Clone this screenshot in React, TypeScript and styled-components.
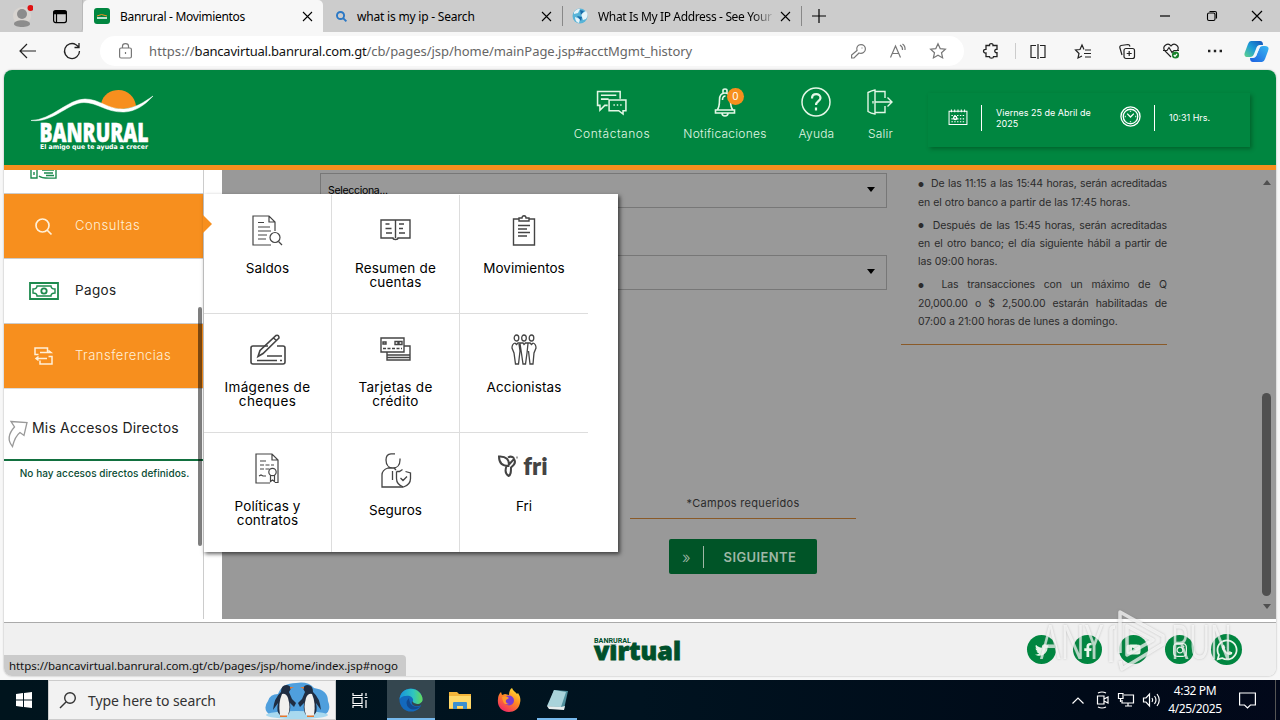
import React from 'react';
import styled, { createGlobalStyle, css } from 'styled-components';
import {
  FaTwitter,
  FaFacebookF,
  FaYoutube,
  FaInstagram,
  FaWhatsapp,
} from 'react-icons/fa';

const GREEN = '#008640';
const ORANGE = '#f78f1e';

const GlobalStyle = createGlobalStyle`
  * {
    box-sizing: border-box;
  }
  body {
    margin: 0;
    overflow: hidden;
    font-family: 'Noto Sans', 'Open Sans', sans-serif;
  }
`;

const Screen = styled.div`
  width: 1280px;
  height: 720px;
  display: flex;
  flex-direction: column;
  background: #f7f7f7;
  overflow: hidden;
`;

const Text = styled.span<{
  $size: number;
  $ls?: number;
  $color?: string;
  $weight?: number;
}>`
  font-size: ${(p) => p.$size}px;
  letter-spacing: ${(p) => p.$ls ?? 0}px;
  color: ${(p) => p.$color ?? 'inherit'};
  font-weight: ${(p) => p.$weight ?? 400};
  white-space: nowrap;
`;

const Svg = styled.svg<{ $sw?: number }>`
  display: block;
  flex: none;
  fill: none;
  stroke: currentColor;
  stroke-width: ${(p) => p.$sw ?? 1.2};
  overflow: visible;
`;

/* ---------- browser ---------- */

const TabStrip = styled.div`
  display: flex;
  height: 32px;
  flex: none;
  background: #cccccc;
`;

const Profile = styled.div`
  width: 83px;
  display: flex;
  align-items: center;
  padding-left: 13px;
  gap: 22px;
  border-bottom-right-radius: 4px;
  border-right: 1px solid #b9b9b9;
`;

const Tab = styled.div<{ $active?: boolean; $width: number; $pad?: number }>`
  width: ${(p) => p.$width}px;
  display: flex;
  align-items: center;
  padding: 0 11px 0 ${(p) => p.$pad ?? 12}px;
  ${(p) =>
    p.$active &&
    css`
      background: #f7f7f7;
      border-radius: 5px 5px 0 0;
    `}
`;

const TabTitle = styled.div<{ $fade?: boolean }>`
  flex: 1;
  min-width: 0;
  margin-left: 10px;
  white-space: nowrap;
  line-height: 20px;
  ${(p) =>
    p.$fade &&
    css`
      mask-image: linear-gradient(90deg, #000 84%, transparent 97%);
    `}
`;

const Divider = styled.div<{ $h: number; $color: string }>`
  width: 1px;
  height: ${(p) => p.$h}px;
  align-self: center;
  background: ${(p) => p.$color};
`;

const ToolDivider = styled(Divider)`
  margin: 0 -14px 0 -12px;
`;

const Favicon = styled.div`
  width: 16px;
  height: 16px;
  border-radius: 3px;
  background: ${GREEN};
  display: grid;
  place-items: center;
`;

const WindowButtons = styled.div`
  margin-left: auto;
  display: flex;
  align-items: center;
  gap: 35.5px;
  padding-right: 18px;
`;

const Toolbar = styled.div`
  height: 38px;
  flex: none;
  display: flex;
  align-items: center;
  padding-left: 19px;
  color: #222;
`;

const NavButtons = styled.div`
  display: flex;
  flex: none;
  gap: 28px;
  width: 81px;
`;

const AddressBar = styled.div`
  width: 864px;
  flex: none;
  height: 30px;
  border-radius: 15px;
  background: #fff;
  display: flex;
  align-items: center;
  padding: 0 18px 0 19px;
  color: #777;
`;

const Url = styled.div`
  flex: 1;
  margin-left: 17px;
  margin-top: -2px;
  white-space: pre;
  line-height: 20px;
`;

const AddressIcons = styled.div`
  display: flex;
  align-items: center;
  gap: 24px;
`;

const ToolIcons = styled.div`
  display: flex;
  align-items: center;
  margin-left: 19px;
  gap: 28.2px;
`;

/* ---------- page ---------- */

const Viewport = styled.div`
  position: relative;
  height: 606px;
  flex: none;
  margin: 0 4px;
  display: flex;
  flex-direction: column;
  border-radius: 8px;
  overflow: hidden;
  background: #fff;
  font-family: 'Inter', sans-serif;
  box-shadow: 0 0 2px rgba(0, 0, 0, 0.35);
`;

const Header = styled.header`
  height: 100px;
  flex: none;
  display: flex;
  background: ${GREEN};
  border-bottom: 5px solid ${ORANGE};
  color: #fff;
`;

const Brand = styled.div`
  width: 560px;
  padding: 18px 0 0 26px;
`;

const HeaderLink = styled.div<{ $width: number }>`
  position: relative;
  width: ${(p) => p.$width}px;
  display: flex;
  flex-direction: column;
  align-items: center;
  padding-top: 16px;
  color: #e3f7e6;
`;

const HeaderIcon = styled.div`
  height: 34px;
  display: grid;
  place-items: center;
  margin: -1px 1px 7px 0;
`;

const Badge = styled.div`
  position: absolute;
  left: 67px;
  top: 18px;
  width: 17px;
  height: 17px;
  border-radius: 50%;
  background: ${ORANGE};
  color: #fff;
  font-size: 10px;
  line-height: 17px;
  text-align: center;
`;

const DateBox = styled.div`
  width: 322px;
  height: 54px;
  margin: 23px 0 0 10px;
  padding: 0 0 5px 20px;
  display: flex;
  align-items: center;
  box-shadow: 2px 2px 4px rgba(0, 60, 20, 0.45);
`;

const DateText = styled.div<{ $width: number }>`
  width: ${(p) => p.$width}px;
  flex: none;
  margin-left: 14px;
  font-size: 9px;
  line-height: 11px;
  white-space: pre;
`;

const HeaderRule = styled.div`
  width: 1px;
  height: 26px;
  margin-left: 13px;
  background: #fff;
`;

const Content = styled.div`
  height: 449px;
  flex: none;
  display: flex;
`;

const Sidebar = styled.aside`
  position: relative;
  width: 200px;
  flex: none;
  overflow: hidden;
  border-right: 1px solid #ccc;
`;

const CutRow = styled.div`
  height: 23px;
  padding-left: 26px;
  color: #1d8a4e;
  overflow: hidden;
`;

const MenuRow = styled.div<{ $active?: boolean }>`
  height: 65px;
  display: flex;
  align-items: center;
  border-top: 1px solid #ccc;
  padding-bottom: 3px;
  background: ${(p) => (p.$active ? ORANGE : '#fff')};
  color: ${(p) => (p.$active ? '#fff0d8' : '#222')};
`;

const MenuIcon = styled.div<{ $active?: boolean }>`
  width: 71px;
  padding: 3px 0 0 8px;
  display: grid;
  place-items: center;
  color: ${(p) => (p.$active ? '#fff0d8' : '#1d8a4e')};
`;

const Shortcuts = styled.div`
  height: 73px;
  display: flex;
  align-items: center;
  padding: 19px 0 0 3px;
  gap: 4px;
  border-top: 1px solid #ddd;
  border-bottom: 2px solid #12703f;
`;

const ShortcutsTitle = styled.div`
  margin-top: -13px;
  color: #222;
`;

const NoShortcuts = styled.div`
  padding-top: 2px;
  padding-left: 2px;
  text-align: center;
  line-height: 16px;
`;

const SideThumb = styled.div`
  position: absolute;
  right: 1px;
  top: 137px;
  width: 4px;
  height: 239px;
  border-radius: 2px;
  background: rgba(0, 0, 0, 0.5);
`;

const Main = styled.main`
  flex: 1;
  margin-left: 18px;
  display: flex;
  background: #999;
`;

const Form = styled.div`
  width: 567px;
  margin-left: 98px;
  padding-top: 3px;
`;

const Select = styled.div<{ $gap: number }>`
  height: 35px;
  margin-bottom: ${(p) => p.$gap}px;
  padding: 0 11px 0 7px;
  border: 1px solid #777;
  display: flex;
  align-items: center;
  justify-content: space-between;
  color: #000;
`;

const Caret = styled.i<{ $up?: boolean; $color?: string }>`
  width: 0;
  height: 0;
  border: 4px solid transparent;
  ${(p) =>
    p.$up
      ? `border-bottom: 5px solid ${p.$color}; border-top: 0;`
      : `border-top: 5px solid ${p.$color ?? '#000'}; border-bottom: 0;`}
`;

const SelectCaret = styled(Caret)`
  margin-bottom: 2px;
`;

const Required = styled.div`
  width: 226px;
  height: 24px;
  margin-left: 310px;
  border-bottom: 1px solid #8a5a28;
  text-align: center;
  color: #2b2b2b;
  line-height: 12px;
`;

const NextButton = styled.button`
  display: flex;
  align-items: center;
  width: 148px;
  height: 35px;
  margin: 20px 0 0 349px;
  padding: 0 0 0 13px;
  border: 0;
  border-radius: 2px;
  background: #005427;
  color: #9fb7a6;
  font-family: inherit;
`;

const ButtonDivider = styled(Divider)`
  margin: 0 20px 0 12px;
`;

const Notes = styled.div`
  width: 266px;
  height: 175px;
  margin-left: 14px;
  padding: 5px 0 0 17px;
  border-bottom: 1px solid #8a5a28;
`;

const Note = styled.p`
  margin: 0 0 5px;
  font-size: 10.5px;
  line-height: 18px;
  color: #2b2b2b;
`;

const Bullet = styled.span`
  margin-right: 3px;
  font-size: 6.5px;
  vertical-align: 0.5px;
`;

const NoteLine = styled.span<{ $last?: boolean }>`
  display: block;
  white-space: nowrap;
  letter-spacing: ${(p) => (p.$last ? -0.04 : -0.15)}px;
  text-align-last: ${(p) => (p.$last ? 'left' : 'justify')};
`;

const Scrollbar = styled.div`
  width: 9px;
  margin: 10px 5px 10px auto;
  display: flex;
  flex-direction: column;
  align-items: center;
`;

const ScrollThumb = styled.div`
  width: 9px;
  height: 203px;
  margin: auto 0 8px;
  border-radius: 5px;
  background: #505050;
`;

/* ---------- flyout ---------- */

const Flyout = styled.div`
  position: absolute;
  left: 199px;
  top: 124px;
  width: 415px;
  height: 358px;
  padding: 1px 0 0;
  background: #fff;
  border: 0 solid #bbb;
  border-left-width: 1px;
  box-shadow: 2px 2px 4px rgba(0, 0, 0, 0.6);
`;

const Arrow = styled.div`
  position: absolute;
  left: -1px;
  top: 21px;
  border: 9px solid transparent;
  border-left-color: ${ORANGE};
  border-right: 0;
`;

const Grid = styled.div`
  display: grid;
  grid-template-columns: repeat(3, 128px);
  grid-template-rows: repeat(3, 119px);
`;

const Cell = styled.div<{ $right: boolean; $bottom: boolean }>`
  display: flex;
  flex-direction: column;
  align-items: center;
  padding-top: 14px;
  border-right: ${(p) => (p.$right ? '1px solid #ddd' : '0')};
  border-bottom: ${(p) => (p.$bottom ? '1px solid #ddd' : '0')};
  color: #444;
`;

const CellIcon = styled.div<{ $tall?: boolean }>`
  height: ${(p) => (p.$tall ? 46 : 42)}px;
  display: grid;
  place-items: center;
`;

const CellLabel = styled.div`
  margin-top: 10px;
  display: flex;
  flex-direction: column;
  align-items: center;
  line-height: 14px;
`;

const FriMark = styled.div`
  display: flex;
  align-items: center;
  font: 800 24px/24px 'Lato', sans-serif;
  gap: 4px;
  margin: -4px 2px 0 0;
`;

/* ---------- footer ---------- */

const Footer = styled.footer`
  height: 54px;
  margin-top: 3px;
  flex: none;
  display: flex;
  border-top: 1px solid #aaa;
  background: #f0f0f0;
`;

const VirtualLogo = styled.div`
  width: 100px;
  margin: 12px 0 0 589px;
`;

const Socials = styled.div`
  display: flex;
  margin-left: auto;
  margin-right: 34px;
  padding-top: 3px;
  align-items: center;
  gap: 17px;
  height: 50px;
`;

const Social = styled.div<{ $size?: number }>`
  width: ${(p) => p.$size ?? 29}px;
  height: ${(p) => p.$size ?? 29}px;
  border-radius: 50%;
  background: ${GREEN};
  color: #e8f5ea;
  display: grid;
  place-items: center;
`;

const StatusBar = styled.div`
  position: absolute;
  left: 0;
  bottom: 0;
  width: 402px;
  height: 21px;
  padding-left: 5px;
  border-top-right-radius: 4px;
  background: #cbcbcb;
  font-family: 'Noto Sans', sans-serif;
  line-height: 18px;
`;

const Watermark = styled.svg`
  position: absolute;
  left: 1038px;
  top: 606px;
  overflow: visible;
  filter: drop-shadow(0 0 1px rgba(110, 110, 110, 0.5));
`;

const Desktop = styled.div`
  height: 4px;
  flex: none;
`;

/* ---------- taskbar ---------- */

const Taskbar = styled.div`
  height: 40px;
  flex: none;
  display: flex;
  align-items: stretch;
  background: linear-gradient(90deg, #00141d 0%, #001320 50%, #000a18 85%, #02081a 100%);
  color: #fff;
`;

const Start = styled.div`
  width: 48px;
  display: grid;
  place-items: center;
`;

const SearchBox = styled.div`
  width: 288px;
  display: flex;
  align-items: center;
  padding: 0 5px 0 11px;
  background: #f2f2f2;
  border: 1px solid #ccc;
  color: #333;
`;

const SearchHint = styled.div`
  flex: 1;
  margin-left: 12px;
`;

const TaskItem = styled.div<{ $active?: boolean; $open?: boolean; $width: number; $gap?: number }>`
  width: ${(p) => p.$width}px;
  margin-left: ${(p) => p.$gap ?? 0}px;
  display: grid;
  place-items: center;
  background: ${(p) => (p.$active ? '#34464f' : 'transparent')};
  border-top: 2px solid transparent;
  border-bottom: 2px solid ${(p) => (p.$open ? '#76b9ed' : 'transparent')};
`;

const Tray = styled.div`
  margin-left: auto;
  display: flex;
  align-items: center;
`;

const TrayIcons = styled.div`
  display: flex;
  align-items: center;
  gap: 9px;
`;

const Clock = styled.div`
  width: 70px;
  display: flex;
  flex-direction: column;
  align-items: center;
  line-height: 18px;
`;

const ShowDesktop = styled.div`
  width: 5px;
  height: 40px;
  margin-left: 19px;
  border-left: 1px solid #555;
`;

/* ---------- drawings ---------- */

const CloseIcon = ({ size = 9 }: { size?: number }) => (
  <Svg width={size} height={size} viewBox="0 0 10 10">
    <path d="M0 0l10 10M10 0L0 10" />
  </Svg>
);

const BrandLogo = () => (
  <svg width="126" height="66" viewBox="0 0 126 66" overflow="visible">
    <path d="M71 16C73 6 81 2 88.500 2 98 2 105 9 106 18 93 23 80 21 71 16Z" fill={ORANGE} />
    <path
      d="M1 32.500C22 32 38 11 55 11C70 11 78 22 94 21C105 20 113 15 123 8C114 18 105 23.500 94 24C76 24.500 68 14.500 54 14.500C38 14.500 24 35 1 32.500Z"
      fill="#fff"
      stroke="#fff"
      strokeWidth=".5"
    />
    <text x="9.500" y="53.500" textLength="109" lengthAdjust="spacingAndGlyphs" fontFamily="Open Sans, sans-serif" fontWeight="800" fontSize="26" fill="#fff" stroke="#fff" strokeWidth=".5">
      BANRURAL
    </text>
    <text x="10" y="60.500" textLength="108" lengthAdjust="spacingAndGlyphs" fontFamily="DejaVu Sans, sans-serif" fontWeight="700" fontSize="6.500" fill="#fff">
      El amigo que te ayuda a crecer
    </text>
  </svg>
);

const ChatIcon = () => (
  <Svg width="31" height="25" viewBox="0 0 32 26" $sw={1.6}>
    <path d="M12 16H9l-5 5v-5H1.500V1.500H25V9" />
    <path d="M5 5.500h16M5 9.500h8M13.500 10.500H31v11h-3v3.500l-4.500-3.500h-10z" />
    <path d="M18 15.500h1.500M21.500 15.500h1.500M25 15.500h1.500" />
  </Svg>
);

const BellIcon = () => (
  <Svg width="22" height="28" viewBox="0 0 22 28" $sw={1.6}>
    <path d="M9 5V2.500C9 .5 13 .5 13 2.500V5M1.500 22h19v3h-19zM3 22c2-2 2.500-6 2.500-10C5.500 7 8 5 11 5s5.500 2 5.500 7c0 4 .5 8 2.500 10M8 25c0 4 6 4 6 0M8.500 12c0-2 1-4 3-4" />
  </Svg>
);

const HelpIcon = () => (
  <Svg width="30" height="30" viewBox="0 0 30 30" $sw={1.5}>
    <circle cx="15" cy="15" r="14" />
    <path d="M11 11.500C11 5.500 19.500 6 19.500 11c0 3-4.500 3.500-4.500 7M15 20.500v3" strokeWidth="2.200" />
  </Svg>
);

const ExitIcon = () => (
  <Svg width="26" height="26" viewBox="0 0 26 26" $sw={1.4}>
    <path d="M1 3.500q4-2 7-2.500v24q-4-.5-7-2.500zM8 2.500h10V9M18 17v6.500H8M6 12v2.500M8.500 13h16M20.500 8.500L25 13l-4.500 4.500" />
  </Svg>
);

const CalendarIcon = () => (
  <Svg width="20" height="16" viewBox="0 0 20 17" $sw={1.1} style={{ marginBottom: 1 }}>
    <path d="M.5 2.500h19v14H.5zM3 .5v3M6.500.5v3M10 .5v3M13.500.5v3M17 .5v3" />
    <path d="M3 7h14M3 10.500h14M3 13.500h14" strokeDasharray="1.500 1.500" />
    <circle cx="7" cy="9.500" r="1.700" strokeWidth="1.400" />
  </Svg>
);

const ClockIcon = () => (
  <Svg width="21" height="21" viewBox="0 0 22 22" $sw={1.4}>
    <circle cx="11" cy="11" r="10" />
    <circle cx="11" cy="11" r="7.600" />
    <path d="M7.500 8l3.500 3.500L14.500 8M11 5v1M11 16v1M5 11h1M16 11h1" />
  </Svg>
);

const ClockHolder = styled.div`
  margin-bottom: 2px;
`;

const HandIcon = () => (
  <Svg width="28" height="18" viewBox="0 0 28 18" $sw={1.4} style={{ marginTop: -9 }}>
    <path d="M1 0v17h6V0M4 11v3M9 15c3 3 8 2 17 2V2M12 9h12M14 12h9M16 14.500h8" />
  </Svg>
);

const SearchIcon = ({ size = 17 }: { size?: number }) => (
  <Svg width={size} height={size} viewBox="0 0 17 17" $sw={1.7}>
    <circle cx="7.500" cy="7.500" r="6.500" />
    <path d="M12 12l4.500 4.500" />
  </Svg>
);

const BillIcon = () => (
  <Svg width="30" height="18" viewBox="0 0 30 18" $sw={1.8}>
    <path d="M1 1h28v16H1z" />
    <path d="M8 4h14c0 2 1.500 3 4 3v4c-2.500 0-4 1-4 3H8c0-2-1.500-3-4-3V7c2.500 0 4-1 4-3z" strokeWidth="1.400" />
    <circle cx="15" cy="9" r="2.700" />
  </Svg>
);

const TransferIcon = () => (
  <Svg width="19" height="18" viewBox="0 0 19 18" $sw={1.5}>
    <path d="M4.500 7.500H1V1h12.500v4M6 5.500h11l-2.500-2M2 11.500h11M4.500 9.500L2 11.500l2.500 2M14.500 9.500H18V17H6v-3.500" />
  </Svg>
);

const ShortcutIcon = () => (
  <Svg width="21" height="28" viewBox="0 0 21 28" $sw={1.3} style={{ color: '#999' }}>
    <path d="M4 1.500l16 1-3 13-4-3c-4 3-6 8-7.500 14C0 20 2 13 7.500 7z" />
  </Svg>
);

const SaldosIcon = () => (
  <Svg width="31" height="31" viewBox="0 0 31 31">
    <path d="M19 30H1V1h16l6 6v9M17 1v6h6M6 7.500h6M6 12h12M6 16h13M6 20h9M6 24h8" />
    <circle cx="23" cy="22.500" r="5" />
    <path d="M26.500 26.500L30 30" />
  </Svg>
);

const BookIcon = () => (
  <Svg width="31" height="22" viewBox="0 0 31 22" $sw={1.4}>
    <path d="M1 1h29v18H18c0 2-5 2-5 0H1zM15.500 1v18M5.500 5h4M5.500 9.500h6M6 14h6M19 5h5M19 9.500h4M19 14h6" />
  </Svg>
);

const ClipboardIcon = () => (
  <Svg width="24" height="31" viewBox="0 0 24 31" $sw={1.4}>
    <path d="M7 4H1.500v26h21V4H17M7 3h3c0-3 4-3 4 0h3v3H7zM6 10.500h12M6 14h9M6 17.500h12M6 21h9" />
  </Svg>
);

const ChequeIcon = () => (
  <Svg width="36" height="31" viewBox="0 0 36 31" $sw={1.6}>
    <path d="M18 12H3q-2 0-2 2v14q0 2 2 2h30q2 0 2-2V14q0-2-2-2h-6M17 22h15M7 26.500h20M30 26.500h2" />
    <path d="M8 22.500l2-6L26 1.500q3-1 3 2.500L13 19.500zM23.500 4l3.500 3" />
  </Svg>
);

const CardsIcon = () => (
  <Svg width="31" height="24" viewBox="0 0 31 24" $sw={1.4}>
    <path d="M1 1h23v14H1zM24 9h6v14H7v-8M7 18h23M7 20.500h23M3 5h3v2H3zM15 4.500h3v3h-3zM19 4.500h3v3h-3z" />
    <path d="M3 11.500h19" strokeDasharray="3 1.500" />
  </Svg>
);

const PeopleIcon = () => (
  <Svg width="26" height="31" viewBox="0 0 26 31" $sw={1.3}>
    <ellipse cx="5.500" cy="4" rx="2.300" ry="3" />
    <ellipse cx="13" cy="4" rx="2.300" ry="3" />
    <ellipse cx="20.500" cy="4" rx="2.300" ry="3" />
    <path d="M4 9q-3 1-3 5l2 5 1.500 11h3L9 17l-1-7M9 9.500l1.500 10L12 30h2.500L16 19l1-9.500M17.500 17L19 30h3l1-11 2-5q0-4-3-5M4 9l1.500 1.500L7 9h5l1 1.500L14.500 9H19l1.500 1.500L22 9" />
  </Svg>
);

const ContractIcon = () => (
  <Svg width="25" height="31" viewBox="0 0 25 31">
    <path d="M15 30H1V1h16l6 6v22.500h-3M17 1v6h6M5 8h6M4 23l2-1 2 1h3" />
    <path d="M5 12h14M5 16h10" strokeDasharray="4 1.500" />
    <circle cx="17.500" cy="19" r="3.700" />
    <path d="M15.500 22v6.500l2-1.500 2 1.500V22" />
  </Svg>
);

const SegurosIcon = () => (
  <Svg width="30" height="35" viewBox="0 0 30 35" $sw={1.3}>
    <path d="M22 34H1V22q0-5 6-7h6l2 2M14 .8h-4Q5 1 5 7c0 5 3 8 7 8s7-3 7-8V5.500M11.500 18v9" />
    <path d="M15.500 18.500l3 0 3-2M15.500 18.500v7c0 5 2.500 7 7 8.500 4.500-1.500 7-4 7-8.500V20l-5-1.500M19.500 25l2.500 2.500 4-4" />
  </Svg>
);

const FriIcon = () => (
  <FriMark>
    <Svg width="21" height="22" viewBox="0 0 21 22" $sw={2}>
      <path d="M1 1.500C8 1 12 5 10.500 11 4 11 1 7 1 1.500zM10.500 10L16 4c2 3 .5 6-3 8.500C13 17 13 20 10.500 21c-3-2-3.500-6-2-10M10 2.500Q13 .5 16 3M18.500 2.500h1" />
    </Svg>
    fri
  </FriMark>
);

type CellData = { icon: React.ReactNode; lines: string[]; tall?: boolean; ls?: number };

const cells: CellData[] = [
  { icon: <SaldosIcon />, lines: ['Saldos'], ls: 0.1 },
  { icon: <BookIcon />, lines: ['Resumen de', 'cuentas'], ls: 0.2 },
  { icon: <ClipboardIcon />, lines: ['Movimientos'] },
  { icon: <ChequeIcon />, lines: ['Imágenes de', 'cheques'], ls: 0.35 },
  { icon: <CardsIcon />, lines: ['Tarjetas de', 'crédito'], ls: 0.3 },
  { icon: <PeopleIcon />, lines: ['Accionistas'], ls: 0.1 },
  { icon: <ContractIcon />, lines: ['Políticas y', 'contratos'], ls: 0.1 },
  { icon: <SegurosIcon />, lines: ['Seguros'], tall: true },
  { icon: <FriIcon />, lines: ['Fri'] },
];

const notes: string[][] = [
  ['De las 11:15 a las 15:44 horas, serán acreditadas', 'en el otro banco a partir de las 17:45 horas.'],
  [
    'Después de las 15:45 horas, serán acreditadas',
    'en el otro banco; el día siguiente hábil a partir de',
    'las 09:00 horas.',
  ],
  [
    'Las transacciones con un máximo de Q',
    '20,000.00 o $ 2,500.00 estarán habilitadas de',
    '07:00 a 21:00 horas de lunes a domingo.',
  ],
];

function BrowserChrome() {
  return (
    <>
      <TabStrip>
        <Profile>
          <svg width="20" height="24" viewBox="0 0 20 24">
            <circle cx="9" cy="12" r="9" fill="#d8d4d0" />
            <circle cx="9" cy="10" r="5" fill="#8c8c8c" />
            <path d="M1 20c0-5 16-5 16 0 0 4-16 4-16 0z" fill="#8c8c8c" />
            <circle cx="17.500" cy="4" r="3" fill="#e01010" />
          </svg>
          <Svg width="14" height="13" viewBox="0 0 14 13" style={{ color: '#000', marginLeft: -2 }}>
            <rect x=".6" y=".6" width="12.800" height="12" rx="2" />
            <path d="M.6 2.500h12.800" strokeWidth="3.500" />
            <path d="M3.500 3v9.500" />
          </Svg>
        </Profile>
        <Tab $width={240} $active $pad={11}>
          <Favicon>
            <svg width="12" height="6" viewBox="0 0 12 6">
              <path d="M1 3q4-3 10 0" stroke={ORANGE} fill="none" />
              <path d="M1 5h10" stroke="#fff" strokeWidth="1.500" />
            </svg>
          </Favicon>
          <TabTitle>
            <Text $size={12} $ls={-0.32}>Banrural - Movimientos</Text>
          </TabTitle>
          <CloseIcon />
        </Tab>
        <Tab $width={239} $pad={13}>
          <Svg width="11" height="11" viewBox="0 0 17 17" $sw={3} style={{ color: '#2b78c5' }}>
            <circle cx="7" cy="7" r="5.500" />
            <path d="M11 11l5 5" />
          </Svg>
          <TabTitle>
            <Text $size={12} $ls={-0.2}>what is my ip - Search</Text>
          </TabTitle>
          <CloseIcon />
        </Tab>
        <Divider $h={20} $color="#888" />
        <Tab $width={238} $pad={9}>
          <svg width="16" height="16" viewBox="0 0 16 16">
            <circle cx="8" cy="8" r="7.500" fill="#58b4d8" />
            <path d="M2 4q4-4 6-3l-2 4-4 1zM9 6l5-3q3 4 0 8l-3 1zM3 9l5 2-1 4q-4-1-4-6z" fill="#e6f4fa" />
            <path d="M8 2l4 1-3 4zM5 8l5 1-1 4z" fill="#1a6aa8" />
          </svg>
          <TabTitle $fade>
            <Text $size={12} $ls={-0.35}>What Is My IP Address - See Your</Text>
          </TabTitle>
          <CloseIcon />
        </Tab>
        <Divider $h={20} $color="#888" />
        <Svg width="14" height="14" viewBox="0 0 14 14" style={{ alignSelf: 'center', marginLeft: 10 }}>
          <path d="M7 0v14M0 7h14" />
        </Svg>
        <WindowButtons>
          <Svg width="11" height="10" viewBox="0 0 11 10">
            <path d="M0 5h10" />
          </Svg>
          <Svg width="10" height="10" viewBox="0 0 10 10" $sw={1.1}>
            <rect x=".5" y="2" width="7.500" height="7.500" rx="1.500" />
            <path d="M2.500.5H8q1.500 0 1.500 1.500v5.500" />
          </Svg>
          <CloseIcon size={10} />
        </WindowButtons>
      </TabStrip>
      <Toolbar>
        <NavButtons>
          <Svg width="17" height="16" viewBox="0 0 17 16">
            <path d="M8 1L1 8l7 7M1 8h16" />
          </Svg>
          <Svg width="16" height="16" viewBox="0 0 16 16" $sw={1.3}>
            <path d="M15.500 8A7.500 7.500 0 1 1 12 1.700L15 4M15 0v4.500h-4.500" />
          </Svg>
        </NavButtons>
        <AddressBar>
          <Svg width="13" height="16" viewBox="0 0 13 16">
            <rect x=".6" y="5" width="11.800" height="10" rx="1.500" />
            <path d="M3.500 5V3q0-2.400 3-2.400T9.500 3v2M6.500 9v2" />
          </Svg>
          <Url>
            <Text $size={13} $ls={0.1} $color="#666">https://</Text>
            <Text $size={13} $ls={-0.2} $color="#111">bancavirtual.banrural.com.gt</Text>
            <Text $size={13} $ls={-0.05} $color="#666">/cb/pages/jsp/home/mainPage.jsp#acctMgmt_history</Text>
          </Url>
          <AddressIcons>
            <Svg width="15" height="15" viewBox="0 0 15 15">
              <path d="M8 9l-5 5H.6v-3L6 6.500C5 3 7 .6 10 .6c2.500 0 4.400 2 4.400 4.400C14.400 8 11.500 10 8 9zM10.500 4h1" />
            </Svg>
            <Svg width="16" height="14" viewBox="0 0 16 14">
              <path d="M.5 13.500L5.500 2l5 11.500M2.500 9.500H9M10 1q3 2 2.500 5M12.500 0q3 2 2.500 6" />
            </Svg>
            <Svg width="16" height="16" viewBox="0 0 16 16">
              <path d="M8 .8l2.200 4.800 5.200.6-3.900 3.500 1.100 5.200L8 12.300l-4.600 2.600 1.100-5.200L.6 6.200l5.200-.6z" />
            </Svg>
          </AddressIcons>
        </AddressBar>
        <ToolIcons>
          <Svg width="16" height="16" viewBox="0 0 16 16" $sw={1.3}>
            <path d="M3 2.500h3.500c-.5-2.500 4-2.500 3.500 0h4v3.800c-3-.5-3 3.900 0 3.400v4h-3.500c0 2-4 2-4 0H3V10C-.3 10.500-.3 6 3 6.300z" />
          </Svg>
          <ToolDivider $h={16} $color="#ccc" />
          <Svg width="16" height="15" viewBox="0 0 16 15">
            <path d="M6 1.500H1v12h5M10 1.500h5v12h-5M8 0v15" />
          </Svg>
          <Svg width="16" height="15" viewBox="0 0 16 15">
            <path d="M9 5.500L7 1 5 5.500l-4.500.5L4 9.500 3 14l4-2M10 6h6M9 9.500h7M10 13h6" />
          </Svg>
          <Svg width="16" height="15" viewBox="0 0 16 15">
            <rect x="5" y="4.500" width="10.500" height="10" rx="2" />
            <path d="M10.200 7v5M7.700 9.500h5M3 11L.8 3.500Q.5 2 2 1.500L9 .5q1.500 0 2 2" />
          </Svg>
          <Svg width="17" height="16" viewBox="0 0 17 16">
            <path d="M8 14L1.500 7.500C-1 3 5-1 8 3c3-4 9 0 6.500 4.500M0 7.500h4l2-3 3 5 2-2h5" />
            <circle cx="12.500" cy="12" r="3.600" fill="#16802b" stroke="none" />
            <path d="M10.800 12l1.200 1.300 2-2.300" stroke="#fff" />
          </Svg>
          <Svg width="14" height="4" viewBox="0 0 14 4">
            <path d="M0 2h2.400M5.800 2h2.400M11.600 2H14" strokeWidth="2.400" />
          </Svg>
          <svg width="25" height="23" viewBox="0 0 25 23" style={{ marginLeft: -6 }}>
            <defs>
              <linearGradient id="cp1" x1="0" y1="1" x2="1" y2="0">
                <stop offset="0" stopColor="#5fd38a" />
                <stop offset=".5" stopColor="#1d9bd8" />
                <stop offset="1" stopColor="#1450b8" />
              </linearGradient>
              <linearGradient id="cp2" x1="0" y1="1" x2="1" y2="0">
                <stop offset="0" stopColor="#1c5fe0" />
                <stop offset="1" stopColor="#39b8f2" />
              </linearGradient>
            </defs>
            <path d="M7 1h9q3 0 3 4h-3q-3 0-4 4l-2 5q-1 3-4 3H4q-5 0-3-5L4 4q1-3 3-3z" fill="url(#cp1)" />
            <path d="M18 22H9q-3 0-3-4h3q3 0 4-4l2-5q1-3 4-3h2q5 0 3 5l-3 8q-1 3-3 3z" fill="url(#cp2)" />
            <path d="M14 7l-4 9h2l4-9z" fill="#eef6ff" />
          </svg>
        </ToolIcons>
      </Toolbar>
    </>
  );
}

function SiteHeader() {
  return (
    <Header>
      <Brand>
        <BrandLogo />
      </Brand>
      <HeaderLink $width={96}>
        <HeaderIcon><ChatIcon /></HeaderIcon>
        <Text $size={12} $ls={0.55} $weight={300}>Contáctanos</Text>
      </HeaderLink>
      <HeaderLink $width={130}>
        <HeaderIcon><BellIcon /></HeaderIcon>
        <Badge>0</Badge>
        <Text $size={12} $ls={0.25} $weight={300}>Notificaciones</Text>
      </HeaderLink>
      <HeaderLink $width={53}>
        <HeaderIcon><HelpIcon /></HeaderIcon>
        <Text $size={12} $ls={0.2} $weight={300}>Ayuda</Text>
      </HeaderLink>
      <HeaderLink $width={75}>
        <HeaderIcon><ExitIcon /></HeaderIcon>
        <Text $size={12} $ls={0.2} $weight={300}>Salir</Text>
      </HeaderLink>
      <DateBox>
        <CalendarIcon />
        <HeaderRule />
        <DateText $width={124}>{'Viernes 25 de Abril de\n2025'}</DateText>
        <ClockHolder><ClockIcon /></ClockHolder>
        <HeaderRule />
        <DateText $width={60}>10:31 Hrs.</DateText>
      </DateBox>
    </Header>
  );
}

function SideMenu() {
  return (
    <Sidebar>
      <CutRow><HandIcon /></CutRow>
      <MenuRow $active>
        <MenuIcon $active><SearchIcon /></MenuIcon>
        <Text $size={13} $weight={300} $ls={0.55}>Consultas</Text>
      </MenuRow>
      <MenuRow>
        <MenuIcon><BillIcon /></MenuIcon>
        <Text $size={13.5} $ls={0.35}>Pagos</Text>
      </MenuRow>
      <MenuRow $active>
        <MenuIcon $active><TransferIcon /></MenuIcon>
        <Text $size={13} $weight={300} $ls={0.5}>Transferencias</Text>
      </MenuRow>
      <Shortcuts>
        <ShortcutIcon />
        <ShortcutsTitle>
          <Text $size={14} $ls={0.18}>Mis Accesos Directos</Text>
        </ShortcutsTitle>
      </Shortcuts>
      <NoShortcuts>
        <Text $size={10} $ls={0.05} $weight={500} $color="#0a4c34">No hay accesos directos definidos.</Text>
      </NoShortcuts>
      <SideThumb />
    </Sidebar>
  );
}

function TransferForm() {
  return (
    <Main>
      <Form>
        <Select $gap={47}>
          <Text $size={10.5} $ls={-0.3}>Selecciona...</Text>
          <SelectCaret />
        </Select>
        <Select $gap={205}>
          <span />
          <SelectCaret />
        </Select>
        <Required>
          <Text $size={11} $ls={0.3}>*Campos requeridos</Text>
        </Required>
        <NextButton>
          <Text $size={16} $weight={300}>»</Text>
          <ButtonDivider $h={22} $color="#9fb7a6" />
          <Text $size={13} $ls={0.4} $weight={600}>SIGUIENTE</Text>
        </NextButton>
      </Form>
      <Notes>
        {notes.map((lines) => (
          <Note key={lines[0]}>
            {lines.map((line, j) => (
              <NoteLine key={line} $last={j === lines.length - 1}>
                {j === 0 && <><Bullet>●</Bullet> </>}
                {line}
              </NoteLine>
            ))}
          </Note>
        ))}
      </Notes>
      <Scrollbar>
        <Caret $up $color="#505050" />
        <ScrollThumb />
        <Caret $color="#505050" />
      </Scrollbar>
    </Main>
  );
}

function WindowsTaskbar() {
  return (
    <Taskbar>
      <Start>
        <svg width="16" height="16" viewBox="0 0 16 16">
          <path d="M0 2l7-1v6.500H0zM8 1l8-1v7.500H8zM0 8.500h7V15l-7-1zM8 8.500h8V16l-8-1z" fill="#fff" />
        </svg>
      </Start>
      <SearchBox>
        <Svg width="16" height="16" viewBox="0 0 16 16" $sw={1.4}>
          <circle cx="10" cy="6" r="5.300" />
          <path d="M6 10l-6 6" />
        </Svg>
        <SearchHint>
          <Text $size={14} $ls={-0.05}>Type here to search</Text>
        </SearchHint>
        <svg width="66" height="38" viewBox="0 0 66 38">
          <path d="M6 34q-8-6-2-14 2-7 10-7Q18 2 32 2q12-2 18 5 14 2 14 13 4 10-4 14z" fill="#4f9fdd" />
          <ellipse cx="33" cy="34" rx="31" ry="4" fill="#a8d9ef" />
          <path d="M17 11q0-7 5.500-7 3.500 0 4.500 3.500l-2 3.500 3 7 4 4-2 4-4-4q1 8-2 12h-8q-4-3-2-12l-5 7q1-12 8-18z" fill="#1f2d42" />
          <path d="M18 13q4-1 6 4 3 10 0 17-4 2-8 0-2-12 2-21z" fill="#f1f0ee" />
          <path d="M49 11q0-7-5.500-7-3.500 0-4.500 3.500l2 3.500-3 7-4 4 2 4 4-4q-1 8 2 12h8q4-3 2-12l5 7q-1-12-8-18z" fill="#1f2d42" />
          <path d="M48 13q-4-1-6 4-3 10 0 17 4 2 8 0 2-12-2-21z" fill="#f1f0ee" />
          <path d="M26 6l4 0-4 2zM40 6l-4 0 4 2zM16 34.500h7v1.500h-7zM43 34.500h7v1.500h-7z" fill="#e8762c" />
        </svg>
      </SearchBox>
      <TaskItem $width={48}>
        <Svg width="16" height="16" viewBox="0 0 16 16">
          <path d="M1 1v2.500h9V1M1 5.500h9v6H1zM1 16v-2.500h9V16M14 1v3M14 8v8M12.500 5.500h3" />
        </Svg>
      </TaskItem>
      <TaskItem $width={48} $gap={3} $active $open>
        <svg width="24" height="24" viewBox="0 0 24 24">
          <defs>
            <linearGradient id="edge" x1="0" y1="0" x2="1" y2="0">
              <stop offset="0" stopColor="#1793dc" />
              <stop offset=".6" stopColor="#2fc5c0" />
              <stop offset="1" stopColor="#65d957" />
            </linearGradient>
          </defs>
          <circle cx="12" cy="12" r="11.500" fill="#1369bd" />
          <path d="M.5 12C1 0 14-2 20 4c6 6 4 13-3 13-3 0-5-2-3-4 1-3-3-6-7-5-4 0-6 2-6.500 4z" fill="url(#edge)" />
          <path d="M10 10q-5 5 0 10 5 4 12-2-4 2-8 0-4-3-4-8z" fill="#12498f" />
          <path d="M13 13q-1 4 3 5 4 1 8-2v-3l-3 2.500q-5 2-8-2.500z" fill="#34464f" />
        </svg>
      </TaskItem>
      <TaskItem $width={49}>
        <svg width="22" height="19" viewBox="0 0 22 19">
          <path d="M0 1h8l2 2h12v15H0z" fill="#f3b53a" />
          <path d="M0 5h22v12H0z" fill="#ffd96a" />
          <path d="M4 18v-6q0-1 1-1h12q1 0 1 1v6h-4v-3H8v3z" fill="#3c8fd0" />
        </svg>
      </TaskItem>
      <TaskItem $width={49}>
        <svg width="24" height="24" viewBox="0 0 24 24">
          <defs>
            <linearGradient id="fox" x1=".8" y1="0" x2=".2" y2="1">
              <stop offset="0" stopColor="#ffe436" />
              <stop offset=".45" stopColor="#ff8a22" />
              <stop offset="1" stopColor="#f0206a" />
            </linearGradient>
          </defs>
          <path d="M12 24C4 24 0 18 1 11c0-3 1-5 3-7l1 3 3-1 4 1c0-3 1-6 3-7 1 3 4 4 5 6l1-1c2 3 3 6 2 10-1 6-6 9-11 9z" fill="url(#fox)" />
          <circle cx="12" cy="12.500" r="5" fill="#7a3bd0" />
          <path d="M5 9q4-2 7 1l-3 2q-1 3 3 4-6 2-7-7z" fill="#ff9a2a" />
        </svg>
      </TaskItem>
      <TaskItem $width={40} $gap={4} $open>
        <svg width="23" height="23" viewBox="0 0 23 23">
          <path d="M8 1l14 1-4 18-16-3z" fill="#4f8f9c" />
          <path d="M8 1l12 2-5 15-14-1z" fill="#a9d3da" />
          <path d="M1 17l14 1 4-1-1 4-15-1z" fill="#e7eeee" />
        </svg>
      </TaskItem>
      <Tray>
        <TrayIcons>
          <Svg width="12" height="7" viewBox="0 0 12 7">
            <path d="M.5 6.500L6 1l5.500 5.500" />
          </Svg>
          <Svg width="18" height="18" viewBox="0 0 18 18">
            <path d="M4.500 5h6.500v8H4.500zM11 8l4-2v6l-4-2M5 2q4-2 8 0M5 16q4 2 8 0" />
          </Svg>
          <Svg width="16" height="14" viewBox="0 0 16 14" style={{ marginLeft: -2 }}>
            <path d="M6 2h9.500v8H4V7M7 13h7M10 10v3M.5.5H5v5H.5zM2.500 5.500V9" />
          </Svg>
          <Svg width="17" height="14" viewBox="0 0 17 14">
            <path d="M.5 5H3l3.500-4v12L3 9H.5zM9 5q1.500 2 0 4M11.500 3q3 4 0 8M14 1q4.500 6 0 12" />
          </Svg>
        </TrayIcons>
        <Clock>
          <Text $size={12} $ls={-0.4}>4:32 PM</Text>
          <Text $size={12} $ls={-0.4}>4/25/2025</Text>
        </Clock>
        <Svg width="17" height="17" viewBox="0 0 17 17" style={{ marginLeft: 9 }}>
          <path d="M.6 1h15.800v12h-5L8.500 16l-3-3H.6z" />
        </Svg>
        <ShowDesktop />
      </Tray>
    </Taskbar>
  );
}

export default function App() {
  return (
    <Screen>
      <GlobalStyle />
      <BrowserChrome />
      <Viewport>
        <SiteHeader />
        <Content>
          <SideMenu />
          <TransferForm />
        </Content>
        <Flyout>
          <Arrow />
          <Grid>
            {cells.map((cell, i) => (
              <Cell key={cell.lines[0]} $right={i % 3 < 2} $bottom={i < 6}>
                <CellIcon $tall={cell.tall}>{cell.icon}</CellIcon>
                <CellLabel>
                  {cell.lines.map((line) => (
                    <Text key={line} $size={13.5} $ls={cell.ls} $color="#000">{line}</Text>
                  ))}
                </CellLabel>
              </Cell>
            ))}
          </Grid>
        </Flyout>
        <Footer>
          <VirtualLogo>
            <svg width="90" height="28" viewBox="0 0 90 28" overflow="visible">
              <text x="1" y="25" textLength="87" lengthAdjust="spacingAndGlyphs" fontFamily="Open Sans, sans-serif" fontWeight="800" fontSize="25" fill="#00502b" stroke="#00502b" strokeWidth=".8">
                virtual
              </text>
              {/* the dot of the i is hidden behind the small wordmark */}
              <path d="M0 0h39v9.500H0z" fill="#f0f0f0" />
              <text x="1" y="8" textLength="37" lengthAdjust="spacingAndGlyphs" fontFamily="Roboto, sans-serif" fontWeight="700" fontSize="8" fill="#00502b">
                BANRURAL
              </text>
            </svg>
          </VirtualLogo>
          <Socials>
            <Social><FaTwitter size={14} /></Social>
            <Social><FaFacebookF size={14} /></Social>
            <Social><FaYoutube size={15} /></Social>
            <Social><FaInstagram size={16} /></Social>
            <Social $size={31}><FaWhatsapp size={24} /></Social>
          </Socials>
        </Footer>
        <StatusBar>
          <Text $size={11.5} $ls={-0.07} $color="#111">https://bancavirtual.banrural.com.gt/cb/pages/jsp/home/index.jsp#nogo</Text>
        </StatusBar>
      </Viewport>
      <Desktop />
      <WindowsTaskbar />
      <Watermark width="196" height="68" viewBox="0 0 196 68">
        <g fill="#fff" fillOpacity=".68" fontFamily="Open Sans, sans-serif" fontSize="47">
          <text x="2" y="53" textLength="63" lengthAdjust="spacingAndGlyphs">ANY</text>
          <text x="133" y="53" textLength="61" lengthAdjust="spacingAndGlyphs">RUN</text>
        </g>
        <g fill="none" stroke="#fff" strokeOpacity=".7" strokeWidth="3.500" strokeLinejoin="round">
          <path d="M73 56V24q0-3 4-3M82 47V6l43 24v8L84 63l-2-8" />
          <path d="M89 20l26 14-26 15z" />
        </g>
      </Watermark>
    </Screen>
  );
}
